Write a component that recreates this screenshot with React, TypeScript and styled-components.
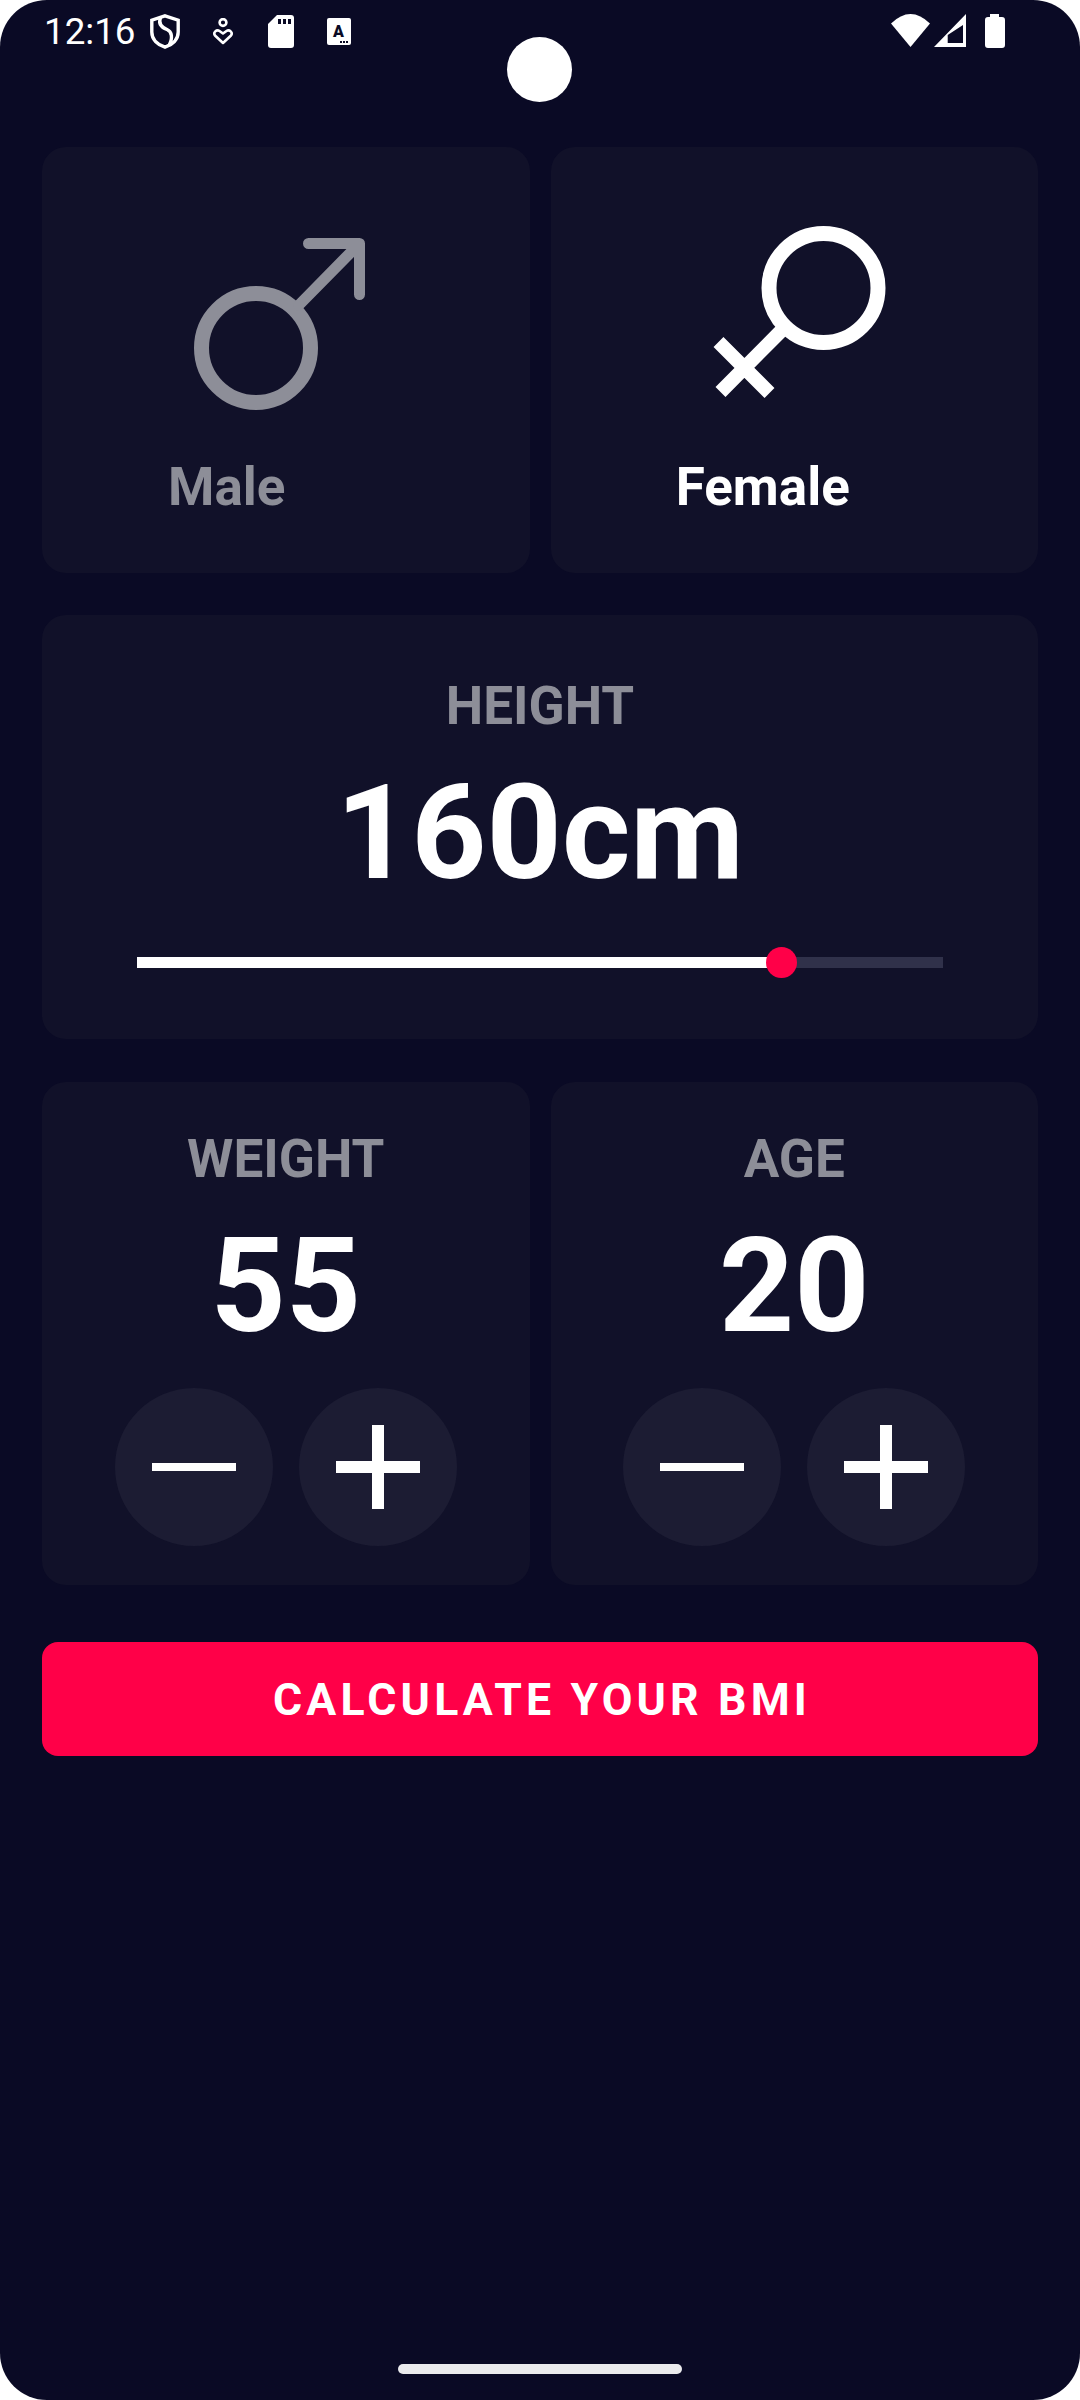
import { createGlobalStyle, styled } from "styled-components";

const GlobalStyle = createGlobalStyle`
  html, body {
    margin: 0;
    background: #fff;
  }
  * {
    box-sizing: border-box;
  }
`;

const Screen = styled.div`
  position: relative;
  width: 1080px;
  height: 2400px;
  display: flex;
  flex-direction: column;
  overflow: hidden;
  border-radius: 47px;
  background: #0a0a25;
  font-family: Roboto, "Liberation Sans", sans-serif;
  color: #fff;
`;

const StatusBar = styled.div`
  display: flex;
  align-items: flex-start;
  height: 147px;
  padding: 14px 75px 0 44px;
`;

const Time = styled.span`
  font-size: 36.75px;
  line-height: 35px;
  width: 106px;
`;

const StatusIcon = styled.svg<{ $gap: number; $top?: number }>`
  display: block;
  flex: none;
  margin-right: ${({ $gap }) => $gap}px;
  margin-top: ${({ $top = 0 }) => $top}px;
`;

const Spacer = styled.div`
  flex: 1;
`;

const Camera = styled.div`
  position: absolute;
  top: 37px;
  left: 507px;
  width: 65px;
  height: 65px;
  border-radius: 50%;
  background: #fff;
`;

const Content = styled.div`
  flex: 1;
  display: flex;
  flex-direction: column;
  padding: 0 42px;
`;

const Row = styled.div`
  display: grid;
  grid-template-columns: 1fr 1fr;
  gap: 21px;
`;

const Card = styled.div`
  display: flex;
  flex-direction: column;
  align-items: center;
  border-radius: 24px;
  background: #111129;
`;

const GenderCard = styled(Card)`
  height: 426px;
  padding-top: 73px;
`;

const HeightCard = styled(Card)`
  height: 424px;
  margin-top: 42px;
  padding: 61px 95px 0;
`;

const CounterCard = styled(Card)`
  height: 503px;
  padding-top: 47px;
`;

const GenderLabel = styled.div<{ $active?: boolean; $shift: number }>`
  margin-top: 36px;
  margin-right: ${({ $shift }) => $shift}px;
  font-size: 53px;
  font-weight: 700;
  line-height: 62px;
  color: ${({ $active }) => ($active ? "#fff" : "#8d8e98")};
`;

const Label = styled.div`
  font-size: 53px;
  font-weight: 700;
  line-height: 61px;
  color: #8d8e98;
`;

const BigValue = styled.div`
  margin-top: 19px;
  font-size: 131.25px;
  font-weight: 700;
  line-height: 154px;
`;

const Counters = styled(Row)`
  margin-top: 43px;
`;

const SliderTrack = styled.div`
  position: relative;
  width: 100%;
  height: 11px;
  margin-top: 47px;
  background: #30314a;
`;

const SliderFill = styled.div`
  height: 100%;
  background: #fff;
`;

const SliderThumb = styled.div`
  position: absolute;
  top: 50%;
  width: 31px;
  height: 31px;
  margin: -15.5px 0 0 -15.5px;
  border-radius: 50%;
  background: #ff0048;
`;

const RoundButtons = styled.div`
  display: flex;
  gap: 26px;
  margin-top: 25px;
`;

const RoundButton = styled.button`
  width: 158px;
  height: 158px;
  padding: 0;
  border: none;
  border-radius: 50%;
  display: flex;
  align-items: center;
  justify-content: center;
  background: #1c1c33;
`;

const CalculateButton = styled.button`
  height: 114px;
  margin-top: 57px;
  padding: 2px 0 0 4px;
  border: none;
  border-radius: 16px;
  background: #ff0048;
  color: #fff;
  font-family: inherit;
  font-size: 44.6px;
  font-weight: 700;
  letter-spacing: 4.15px;
`;

const HomeIndicator = styled.div`
  position: absolute;
  left: 398px;
  bottom: 26px;
  width: 284px;
  height: 10px;
  border-radius: 5px;
  background: #ebebed;
`;

const MaleIcon = () => (
  <svg width="200" height="200" viewBox="0 0 200 200" fill="none" stroke="#8d8e98">
    <circle cx="70" cy="128" r="54.5" strokeWidth="15" />
    <path
      d="M122.5 23.5H173.5V74.5M173.5 23.5L113 85"
      strokeWidth="11"
      strokeLinecap="round"
      strokeLinejoin="round"
    />
  </svg>
);

const FemaleIcon = () => (
  <svg width="200" height="200" viewBox="0 0 200 200" fill="none" stroke="#fff">
    <circle cx="129.5" cy="68" r="54.5" strokeWidth="15" />
    <path d="M88 110L26.5 172M24.5 122L75.5 173" strokeWidth="14" />
  </svg>
);

const MinusIcon = () => (
  <svg width="84" height="8" viewBox="0 0 84 8">
    <rect width="84" height="8" fill="#fff" />
  </svg>
);

const PlusIcon = () => (
  <svg width="84" height="84" viewBox="0 0 84 84" fill="#fff">
    <rect y="36" width="84" height="12" />
    <rect x="36" width="12" height="84" />
  </svg>
);

const Counter = ({ label, value }: { label: string; value: number }) => (
  <CounterCard>
    <Label>{label}</Label>
    <BigValue>{value}</BigValue>
    <RoundButtons>
      <RoundButton>
        <MinusIcon />
      </RoundButton>
      <RoundButton>
        <PlusIcon />
      </RoundButton>
    </RoundButtons>
  </CounterCard>
);

export default function App() {
  const height = 160;
  const percent = ((height - 120) / 50) * 100;

  return (
    <>
      <GlobalStyle />
      <Screen>
        <StatusBar>
          <Time>12:16</Time>
          <StatusIcon $gap={33} width="30" height="35" viewBox="0 0 30 35" fill="none" stroke="#fff" strokeWidth="3.4">
            <path d="M15 1.8L28.2 6.2V18C28.2 25.5 22.5 30.8 15 33.2C7.5 30.8 1.8 25.5 1.8 18V6.2Z" />
            <path d="M10.5 3.5C8 10 12 13.5 17 15.5C22 17.5 23 24 19 31.5" />
          </StatusIcon>
          <StatusIcon $gap={35} $top={4} width="20" height="27" viewBox="0 0 20 27" fill="none" stroke="#fff" strokeWidth="2.6">
            <circle cx="10" cy="4.5" r="3.4" />
            <path d="M10 25L2 17.5C-0.2 14.5 3.6 11 6.5 13L10 15.5L13.5 13C16.4 11 20.2 14.5 18 17.5Z" strokeLinejoin="round" />
          </StatusIcon>
          <StatusIcon $gap={33} $top={1} width="26" height="33" viewBox="0 0 26 33">
            <path d="M9 0H23A3 3 0 0 1 26 3V30A3 3 0 0 1 23 33H3A3 3 0 0 1 0 30V9Z" fill="#fff" />
            <path d="M10 4h3v5h-3zM15 4h3v5h-3zM20 4h3v5h-3z" fill="#0a0a25" />
          </StatusIcon>
          <StatusIcon $gap={0} $top={4} width="24" height="27" viewBox="0 0 24 27">
            <rect width="24" height="27" rx="2" fill="#fff" />
            <text x="11.5" y="19" textAnchor="middle" fontFamily="Roboto" fontWeight="900" fontSize="16" fill="#0a0a25">
              A
            </text>
            <path d="M13 23h2v2h-2zM16 23h2v2h-2zM19 23h2v2h-2z" fill="#0a0a25" />
          </StatusIcon>
          <Spacer />
          <StatusIcon $gap={4} width="39" height="33" viewBox="0 0 39 33">
            <path d="M0 9.5Q19.5 -9.5 39 9.5L19.5 33Z" fill="#fff" />
          </StatusIcon>
          <StatusIcon $gap={19} width="32" height="33" viewBox="0 0 32 33">
            <path d="M32 0V33H0ZM29 11L13.7 21V29H29Z" fill="#fff" fillRule="evenodd" />
          </StatusIcon>
          <StatusIcon $gap={0} width="20" height="34" viewBox="0 0 20 34">
            <path d="M5 0H14V3H17A3 3 0 0 1 20 6V31A3 3 0 0 1 17 34H3A3 3 0 0 1 0 31V6A3 3 0 0 1 3 3H5Z" fill="#fff" />
          </StatusIcon>
        </StatusBar>
        <Camera />
        <Content>
          <Row>
            <GenderCard>
              <MaleIcon />
              <GenderLabel $shift={118}>Male</GenderLabel>
            </GenderCard>
            <GenderCard>
              <FemaleIcon />
              <GenderLabel $active $shift={63}>
                Female
              </GenderLabel>
            </GenderCard>
          </Row>
          <HeightCard>
            <Label>HEIGHT</Label>
            <BigValue>{height}cm</BigValue>
            <SliderTrack>
              <SliderFill style={{ width: `${percent}%` }} />
              <SliderThumb style={{ left: `${percent}%` }} />
            </SliderTrack>
          </HeightCard>
          <Counters>
            <Counter label="WEIGHT" value={55} />
            <Counter label="AGE" value={20} />
          </Counters>
          <CalculateButton>CALCULATE YOUR BMI</CalculateButton>
        </Content>
        <HomeIndicator />
      </Screen>
    </>
  );
}
